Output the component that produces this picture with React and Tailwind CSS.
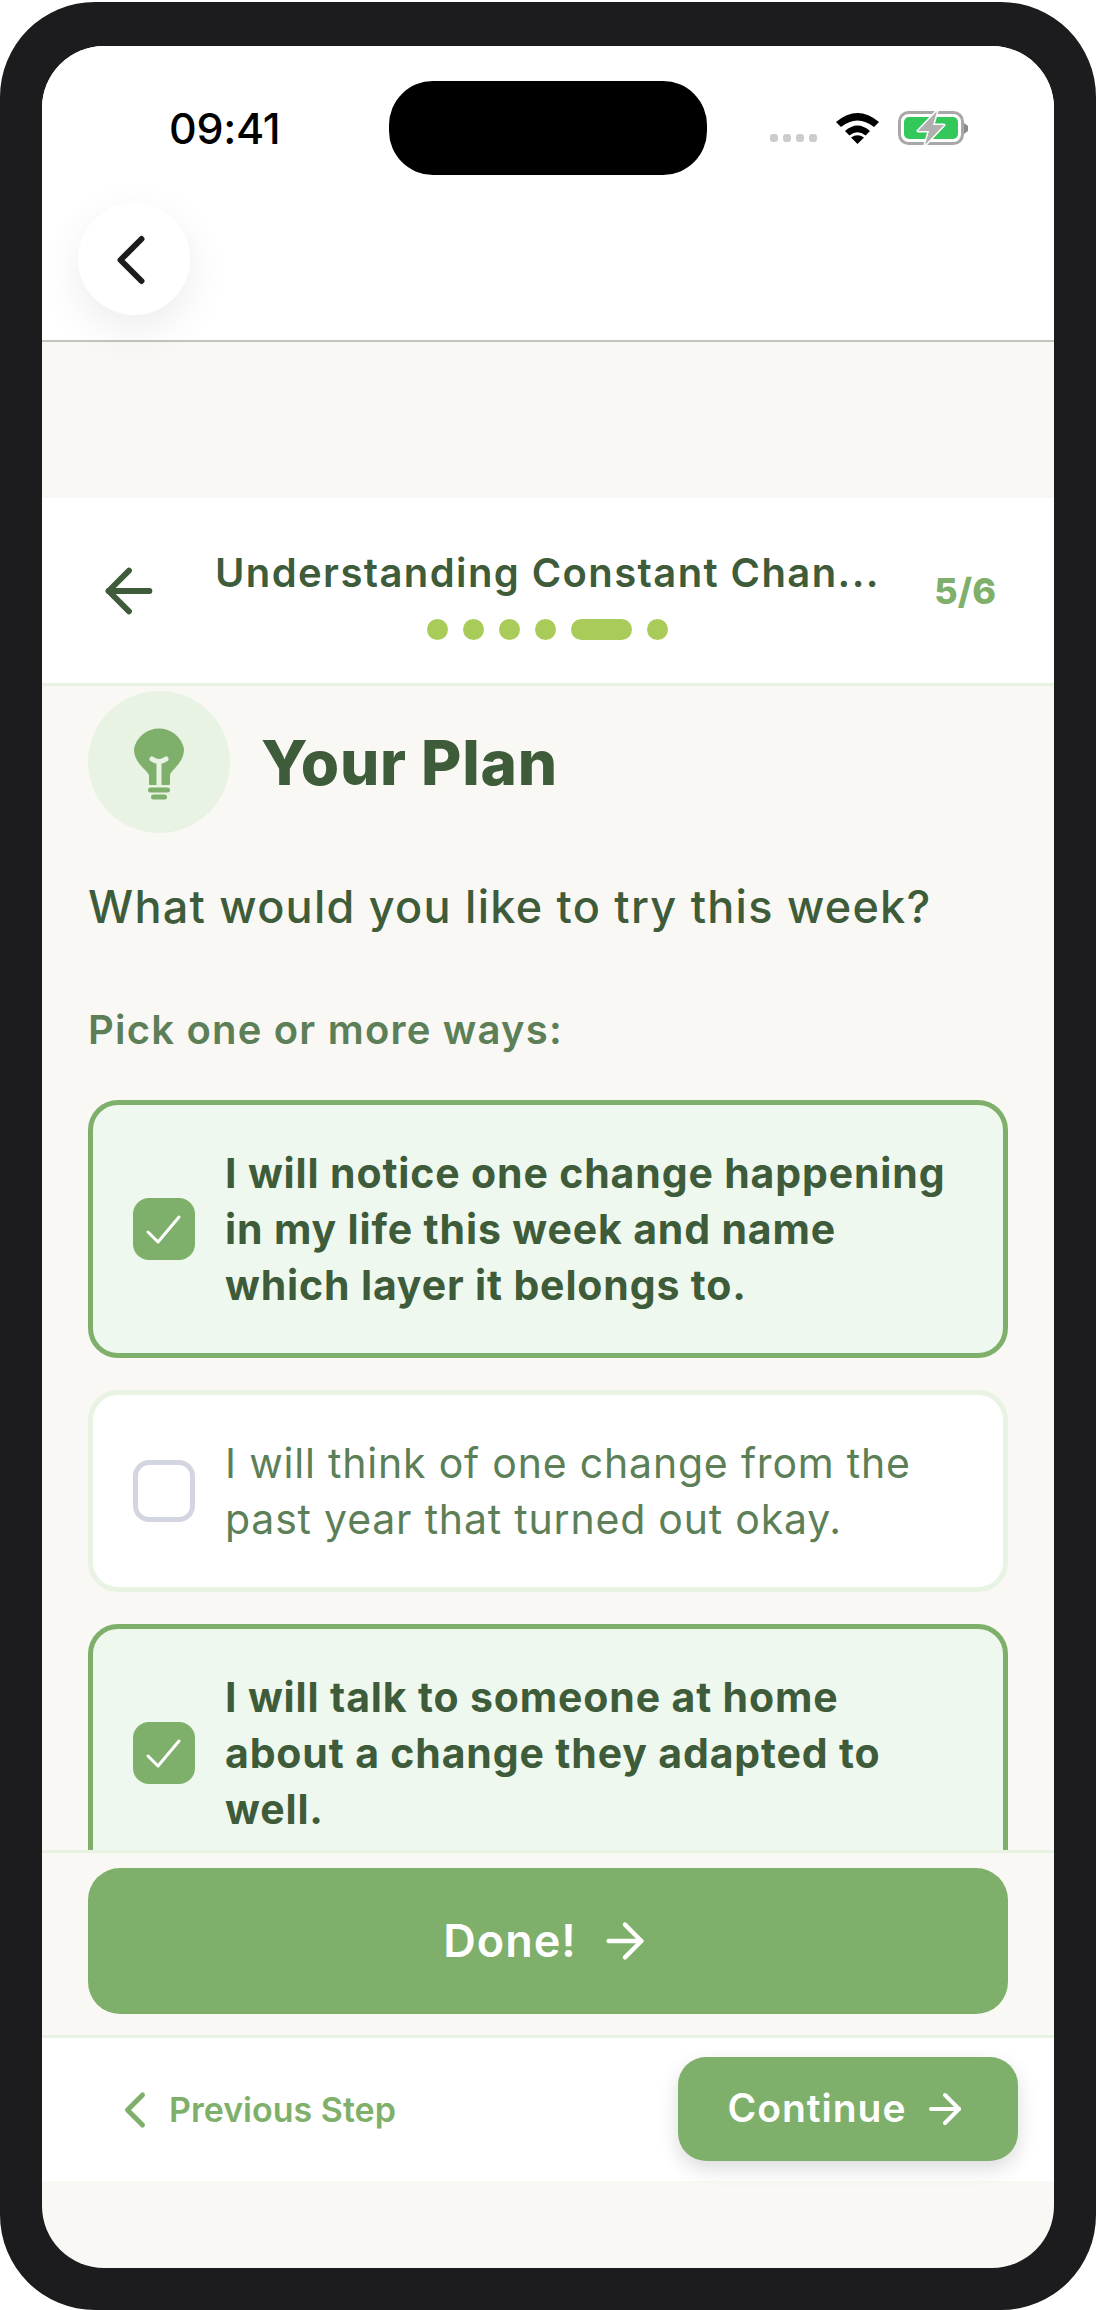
import React from 'react';
import { ArrowLeft, ArrowRight, ChevronLeft } from 'lucide-react';

const options = [
    { text: ['I will notice one change happening', 'in my life this week and name', 'which layer it belongs to.'], checked: true },
    { text: ['I will think of one change from the', 'past year that turned out okay.'], checked: false },
    { text: ['I will talk to someone at home', 'about a change they adapted to', 'well.'], checked: true },
];

function StatusIcons() {
    return (
        <div className="flex items-center">
            <div className="flex gap-[5px] mt-[20px] mr-[19px]">
                {[0, 1, 2, 3].map(i => <div key={i} className="w-[8px] h-[8px] rounded-[3px] bg-[#cccccc]" />)}
            </div>
            <svg width="43" height="32" viewBox="0 0 43 32" className="mr-[19px]">
                <path d="M0 10 Q21.5 -8 43 10 L38 15 Q21.5 2 5 15 Z" fill="#000" />
                <path d="M9 19 Q21.5 8 34 19 L29.5 23.5 Q21.5 17 13.5 23.5 Z" fill="#000" />
                <path d="M15 25.5 Q21.5 21 28 25.5 L21.5 32 Z" fill="#000" />
            </svg>
            <svg width="70" height="34" viewBox="0 0 70 34">
                <rect x="1.5" y="1.5" width="63" height="31" rx="9" fill="none" stroke="#a8a8a8" strokeWidth="3" />
                <rect x="6" y="6" width="54" height="22" rx="5" fill="#34c759" />
                <path d="M66 12 L70 15 V20 L66 23 Z" fill="#8a8a8a" />
                <path d="M39 0 L20 20 H31 L27 34 L46 14 H35 Z" fill="#b0b0b0" stroke="#fff" strokeWidth="3" strokeLinejoin="round" paintOrder="stroke" />
            </svg>
        </div>
    );
}

function Bulb() {
    return (
        <svg width="52" height="78" viewBox="0 0 52 78">
            <path d="M16 61 V52 C14 47 1 40 1 26 A25.5 25.5 0 0 1 51 26 C51 40 38 47 37 52 V61 Q37 62 36 62 H17 Q16 62 16 61 Z" fill="#7fb06b" />
            <path d="M26 62 V39 M19 36 Q26 41 33 36" fill="none" stroke="#e8f3e4" strokeWidth="5" strokeLinecap="round" />
            <rect x="15" y="64.5" width="22" height="5" rx="2.5" fill="#7fb06b" />
            <rect x="18" y="71.5" width="16" height="5" rx="2.5" fill="#7fb06b" />
        </svg>
    );
}

function OptionCard({ option }) {
    return (
        <div className={`flex items-center gap-[30px] rounded-[30px] border-[5px] pl-[40px] pr-[30px] py-[40px] ${option.checked ? 'bg-[#eff8ef] border-[#7fb06b]' : 'bg-white border-[#e8f3e4]'}`}>
            {option.checked ? (
                <div className="shrink-0 w-[62px] h-[62px] rounded-[16px] bg-[#7fb06b]">
                    <svg width="62" height="62" viewBox="0 0 62 62">
                        <path d="M15 34 L25 44 L46 19" fill="none" stroke="#fff" strokeWidth="3" strokeLinecap="round" strokeLinejoin="round" />
                    </svg>
                </div>
            ) : (
                <div className="shrink-0 w-[62px] h-[62px] rounded-[16px] bg-white border-[5px] border-[#d3d6e0]" />
            )}
            <p className={`text-[41px] leading-[56px] whitespace-nowrap ${option.checked ? 'font-bold tracking-[0.85px] text-[#3e5c3a]' : 'font-normal tracking-[0.8px] text-[#5c7f58]'}`}>
                {option.text.map(line => <span key={line} className="block">{line}</span>)}
            </p>
        </div>
    );
}

export default function App() {
    return (
        <div className="w-[1096px] h-[2310px] bg-white pt-[2px] font-['Inter',sans-serif]">
            <div className="h-[2308px] bg-[#1c1c1e] rounded-[95px] px-[42px] pt-[44px]">
                <div className="h-[2222px] rounded-[62px] overflow-hidden bg-[#f9f8f4] flex flex-col">
                    <div className="relative z-10 h-[296px] shrink-0 bg-white border-b-2 border-[#c4c4c0]">
                        <div className="flex items-center h-[94px] mt-[35px]">
                            <div className="w-[347px] pl-[127px] text-[43px] font-medium text-black tracking-[-0.3px]">09:41</div>
                            <div className="w-[318px] h-[94px] rounded-[44px] bg-black" />
                            <div className="pl-[63px]"><StatusIcons /></div>
                        </div>
                        <div className="mt-[28px] ml-[36px] w-[112px] h-[112px] rounded-full bg-white shadow-[0_14px_44px_rgba(0,0,0,0.08)] flex items-center justify-center">
                            <ChevronLeft size={84} strokeWidth={1.7} className="text-[#1c1c1e] mr-[6px] mt-[2px]" />
                        </div>
                    </div>

                    <div className="h-[156px] shrink-0" />

                    <div className="h-[188px] shrink-0 bg-white border-b-[3px] border-[#e8f3e4] flex items-center pl-[60px] pr-[58px]">
                        <ArrowLeft size={70} strokeWidth={2} className="text-[#3e5c3a] shrink-0 -ml-[8px] mr-[53px]" />
                        <div className="w-[661px] flex flex-col items-center mt-[5px]">
                            <div className="text-[40px] leading-[52px] font-semibold text-[#3e5c3a] whitespace-nowrap tracking-[1.4px]">Understanding Constant Chan...</div>
                            <div className="flex gap-[15px] mt-[20px]">
                                {[0, 1, 2, 3].map(i => <div key={i} className="w-[21px] h-[21px] rounded-full bg-[#a8cb5a]" />)}
                                <div className="w-[61px] h-[21px] rounded-full bg-[#a8cb5a]" />
                                <div className="w-[21px] h-[21px] rounded-full bg-[#a8cb5a]" />
                            </div>
                        </div>
                        <div className="ml-auto text-[36px] font-extrabold text-[#7fb06b] mt-[1px]">5/6</div>
                    </div>

                    <div className="h-[1164px] shrink-0 overflow-hidden px-[46px] pt-[5px]">
                        <div className="flex items-center gap-[31px]">
                            <div className="w-[142px] h-[142px] rounded-full bg-[#e8f3e4] flex items-center justify-center">
                                <Bulb />
                            </div>
                            <h1 className="text-[62px] font-extrabold text-[#3e5c3a] tracking-[0.75px]">Your Plan</h1>
                        </div>
                        <p className="mt-[39px] text-[45px] leading-[70px] font-medium tracking-[1.25px] text-[#3e5c3a]">What would you like to try this week?</p>
                        <p className="mt-[63px] text-[40px] leading-[50px] font-semibold tracking-[1.2px] text-[#5c7f58]">Pick one or more ways:</p>
                        <div className="mt-[45px] flex flex-col gap-[32px]">
                            {options.map(option => <OptionCard key={option.text[0]} option={option} />)}
                        </div>
                    </div>

                    <div className="h-[185px] shrink-0 border-t-[3px] border-[#e8f3e4] px-[46px] pt-[15px]">
                        <div className="h-[146px] rounded-[32px] bg-[#7fb06b] flex items-center justify-center gap-[20px] text-white">
                            <span className="text-[45px] font-semibold tracking-[1px]">Done!</span>
                            <ArrowRight size={56} strokeWidth={1.9} />
                        </div>
                    </div>

                    <div className="h-[146px] shrink-0 bg-white border-t-[3px] border-[#e8f3e4] flex items-center justify-between pl-[71px] pr-[36px]">
                        <div className="flex items-center gap-[10px] text-[#7fb06b]">
                            <ChevronLeft size={60} strokeWidth={2} className="-ml-[8px] -mr-[6px]" />
                            <span className="text-[34px] font-semibold">Previous Step</span>
                        </div>
                        <div className="w-[340px] h-[104px] mb-[2px] rounded-[28px] bg-[#7fb06b] shadow-[0_8px_20px_rgba(0,0,0,0.14)] flex items-center justify-center gap-[14px] text-white">
                            <span className="text-[39px] font-semibold tracking-[1px]">Continue</span>
                            <ArrowRight size={48} strokeWidth={2} />
                        </div>
                    </div>
                </div>
            </div>
        </div>
    );
}
